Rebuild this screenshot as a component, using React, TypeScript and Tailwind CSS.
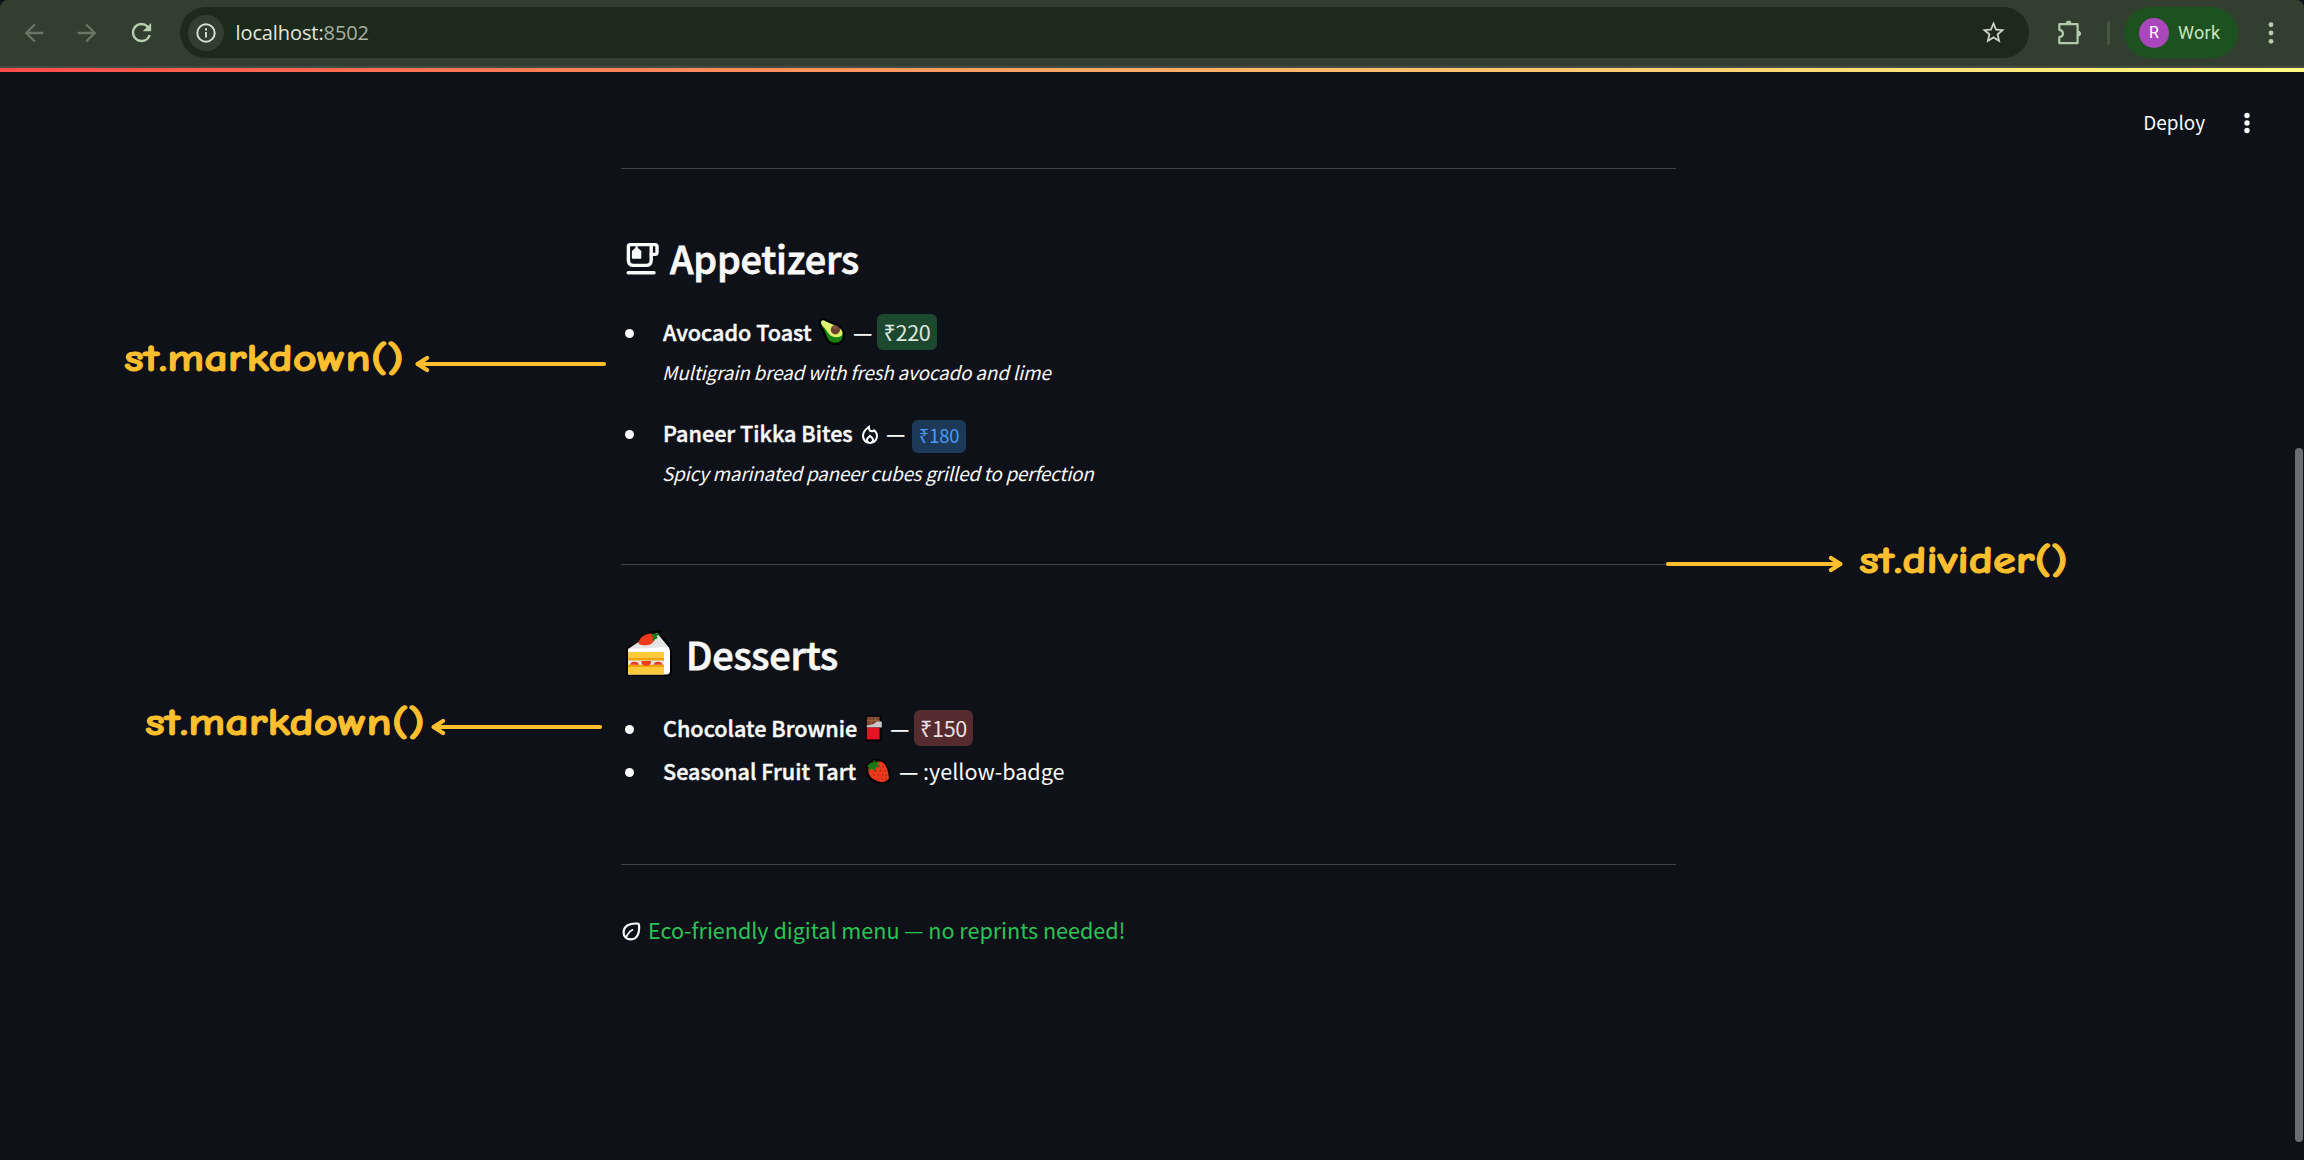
import type { ReactNode } from "react";
import { MdArrowBack, MdArrowForward, MdRefresh, MdStarBorder, MdOutlineLocalFireDepartment } from "react-icons/md";

function InfoIcon() {
  return (
    <svg width="20" height="20" viewBox="0 0 20 20" fill="none" stroke="#d5dccf" strokeWidth="2">
      <circle cx="10" cy="10" r="8.7" />
      <path d="M10 9v5.5M10 5.2v2.2" />
    </svg>
  );
}

function PuzzleIcon() {
  return (
    <svg width="26" height="26" viewBox="0 0 26 26" fill="none" stroke="#b0cba9" strokeWidth="2.2" strokeLinejoin="round">
      <path d="M2.3 4.2H20.6V23.2H2.3V17.2C7.2 16.5 7.2 10.6 2.3 9.8Z" />
      <path d="M9 3.6a2.6 2.6 0 0 1 5.2 0zM21 11a2.6 2.6 0 0 1 0 5.2z" fill="#b0cba9" strokeWidth="1" />
    </svg>
  );
}

function Dots({ className, r }: { className: string; r: number }) {
  return (
    <svg width="8" height="24" viewBox="0 0 8 24" className={className}>
      <circle cx="4" cy={r > 2.5 ? 4.5 : 3.7} r={r} />
      <circle cx="4" cy="12" r={r} />
      <circle cx="4" cy={r > 2.5 ? 19.5 : 20.3} r={r} />
    </svg>
  );
}

function CupIcon() {
  return (
    <svg width="33" height="33" viewBox="0 0 33 33" fill="none" stroke="#fafafa" strokeWidth="3.4" strokeLinejoin="round" strokeLinecap="round" className="shrink-0">
      <path d="M4.2 2.6H29.2Q31 2.6 31 4.4V10.6Q31 12.4 29.2 12.4H25.2" />
      <path d="M25.2 2.6V18.2Q25.2 23.4 20 23.4H7.6Q2.4 23.4 2.4 18.2V4.4Q2.4 2.6 4.2 2.6" />
      <path d="M2.2 30.8H28" />
      <path d="M10.6 3V6" strokeWidth="2" />
      <path d="M6.6 9.2L10.6 5.8L14.6 9.2V16H6.6Z" fill="#fafafa" strokeWidth="1.4" />
    </svg>
  );
}

function LeafIcon() {
  return (
    <svg width="19" height="19" viewBox="0 0 19 19" fill="none" stroke="#fafafa" strokeWidth="2.2" strokeLinejoin="round" strokeLinecap="round" className="shrink-0">
      <path d="M15.6 1.6Q17 1.6 17 3C17.6 9 16.4 17.4 9 17.4C4.4 17.4 1.6 14.4 1.6 10.6C1.6 3.4 8 1 15.6 1.6Z" />
      <path d="M4.2 15.4Q6 10.4 10.6 7.8" strokeWidth="1.7" />
    </svg>
  );
}

function AvocadoIcon() {
  return (
    <svg width="28" height="28" viewBox="0 0 28 28" className="shrink-0">
      <path d="M2 4Q3-.4 8 2.4C14 5.4 26 8 26 18Q25 26 17 26C8 26 8 18 5 12Q1 7 2 4Z" fill="#16840f" stroke="#000" strokeWidth="2.4" />
      <path d="M3 4Q4 .8 8 3.6C13 6.4 23.6 9 24.6 14.5Q24.6 19 19 19.2C11 19.4 9.6 13.4 6.6 10Q2.6 6.2 3 4Z" fill="#dff06e" />
      <circle cx="17.4" cy="11.8" r="4.6" fill="#6b4230" />
      <circle cx="17" cy="9.8" r="1.6" fill="#8a5b46" />
    </svg>
  );
}

function CakeIcon() {
  return (
    <svg width="48" height="48" viewBox="0 0 48 48" className="shrink-0">
      <path d="M1 46V20Q1 18 3 17L14 10Q20 0 38 0L36 3L45 16Q47 19 47 22V43Q47 46 44 46Z" fill="#000" />
      <path d="M3 19L15 11L32 3L43.5 17V19Z" fill="#e4e4e4" />
      <path d="M3 19L43.5 17Q45 19.5 45 22V41Q45 44.4 41.6 44.4H3Z" fill="#fff" />
      <path d="M3 22H39V44.4H3Z" fill="#ffca3c" />
      <path d="M3 28H39V30.4H3ZM3 35H39V37H3Z" fill="#efa308" />
      <path d="M3 30.4H39V34.6H3Z" fill="#e2e2e2" />
      <path d="M5 34.8a4.6 4 0 0 1 9 0zM16.4 32.4V31H26V32.4a4.8 3.4 0 0 1-9.6 0zM28.5 34.8a4.6 4 0 0 1 9 0z" fill="#ee3a1c" />
      <path d="M13.5 13Q14 8 19 5.4Q25 2 29 5L29.5 10Q27 15.4 20 15.2Q14 15.4 13.5 13Z" fill="#ee3a1c" />
      <path d="M26 5L30 3.4L35 4L31.4 6.4L33 8L29.6 9.4L29 11.4Q26.6 9.4 28.6 7Z" fill="#157a12" />
    </svg>
  );
}

function ChocolateIcon() {
  return (
    <svg width="18" height="27" viewBox="0 0 18 27" className="shrink-0">
      <rect x="0.6" y="0.4" width="16" height="26" rx="1.5" fill="#000" />
      <path d="M1.8 1.8H14.6V12H1.8Z" fill="#7c472c" />
      <path d="M1.8 5.6H14.6M6 1.8V10M10.4 1.8V10" stroke="#9a6748" strokeWidth="0.8" />
      <path d="M1.8 10.4Q9 10 12 6.4H16.8V12.6H1.8Z" fill="#c9c9c9" />
      <path d="M1.8 12.6H14.6V24.4H1.8Z" fill="#e81224" />
    </svg>
  );
}

function StrawberryIcon() {
  return (
    <svg width="27" height="27" viewBox="0 0 27 27" className="shrink-0">
      <path d="M1.6 7L9 1.4L19 3.4Q24 8 25 21.5Q22 26.4 13 24.8Q1.6 22 1.6 14Z" fill="#000" stroke="#000" strokeWidth="1.6" strokeLinejoin="round" />
      <path d="M3.2 12Q3.6 6 9 4.4Q15 2.4 18.4 4.8Q23 9 24 20.6Q20 25.8 12 23Q3 19.4 3.2 12Z" fill="#ee3a1c" />
      <g fill="#a81c10">
        <circle cx="14" cy="8" r="0.8" /><circle cx="18" cy="8.4" r="0.8" /><circle cx="11" cy="13" r="0.8" /><circle cx="15.4" cy="12.6" r="0.8" />
        <circle cx="20" cy="13" r="0.8" /><circle cx="9" cy="17" r="0.8" /><circle cx="13.4" cy="17" r="0.8" /><circle cx="17.6" cy="17" r="0.8" />
        <circle cx="21.4" cy="17.4" r="0.8" /><circle cx="13" cy="21" r="0.8" /><circle cx="17" cy="21" r="0.8" /><circle cx="20.8" cy="20.8" r="0.8" />
      </g>
      <path d="M2 9Q4 4.4 8 4.4L9.6 1.6L10.4 4.2L14.4 3.8L12.4 6.6L14.2 9.4L10.6 9.2L10 14L7 10.6L3 13.4L4.4 9.4Z" fill="#157a12" />
    </svg>
  );
}

function Divider() {
  return <div className="ml-px h-px w-[1055px] bg-[#414347]" />;
}

function Bullet() {
  return <span className="ml-[5px] mr-[29px] mt-[3px] size-[9px] shrink-0 rounded-full bg-[#fafafa]" />;
}

function Name({ children }: { children: ReactNode }) {
  return <span className="font-medium [-webkit-text-stroke:0.45px_#fafafa]">{children}</span>;
}

function Arrow({ width, flip }: { width: number; flip?: boolean }) {
  return (
    <svg width={width} height="20" viewBox={`0 0 ${width} 20`} fill="none" stroke="#ffbf2e" strokeWidth="4.2" strokeLinecap="round" strokeLinejoin="round" className={flip ? "-scale-x-100" : ""}>
      <path d={`M3 10H${width - 3}`} />
      <path d="M12 4L2.6 10L12 16" />
    </svg>
  );
}

function BrowserBar() {
  return (
    <div className="flex h-[66px] items-center rounded-t-lg bg-[#323e2f] pb-px">
      <MdArrowBack className="ml-[20px] size-[28px] text-[#687663]" />
      <MdArrowForward className="ml-[25px] size-[28px] text-[#687663]" />
      <MdRefresh className="ml-[26px] size-[29px] text-[#b6cdb0]" />
      <div className="ml-[24px] flex h-[51px] w-[1849px] items-center rounded-full bg-[#1d291a] pl-[7.5px]">
        <div className="flex size-[36px] items-center justify-center rounded-full bg-[#323e2f]"><InfoIcon /></div>
        <span className="ml-[12px] font-['Open_Sans',sans-serif] text-[20px] tracking-[-0.1px] text-[#e3e6df]">
          localhost:<span className="text-[#a9b0a4]">8502</span>
        </span>
        <MdStarBorder className="ml-auto mr-[22px] size-[27px] text-[#cdd2c8]" />
      </div>
      <div className="ml-[28px]"><PuzzleIcon /></div>
      <span className="ml-[24px] h-[24px] w-[3px] rounded-full bg-[#46593f]" />
      <div className="ml-[14px] flex h-[51px] w-[114px] items-center rounded-full bg-[#1e5120] pl-[15px]">
        <span className="flex size-[30px] items-center justify-center rounded-full bg-[#ab47bc] font-[Roboto,sans-serif] text-[16px] text-white">R</span>
        <span className="ml-[9px] font-[Roboto,sans-serif] text-[18px] tracking-[0.3px] text-[#c6e6bf]">Work</span>
      </div>
      <Dots r={2.4} className="ml-[29px] fill-[#b6cdb0]" />
    </div>
  );
}

export default function App() {
  return (
    <div className="relative h-[1160px] w-[2304px] overflow-hidden bg-[#0e1117] font-['Noto_Sans_CJK_SC','Noto_Sans',sans-serif] text-[#fafafa]">
      <BrowserBar />
      <div className="h-[2px] bg-[#484b45]" />
      <div className="h-[4px] bg-linear-to-r from-[#ff4b4b] to-[#fffd80]" />

      <header className="flex h-[96px] items-center justify-end pt-[4px] pr-[53px] text-[18.9px]">
        <span>Deploy</span>
        <Dots r={2.7} className="mt-[2px] ml-[38px] fill-[#fafafa]" />
      </header>

      <main className="ml-[620px] w-[1056px] text-[21.6px] whitespace-nowrap">
        <Divider />
        <h1 className="mt-[62px] flex h-[54px] items-center pl-[6px] text-[37.8px] leading-[54px] font-medium tracking-[-0.2px] [-webkit-text-stroke:0.8px_#fafafa]">
          <CupIcon />
          <span className="ml-[11px]">Appetizers</span>
        </h1>

        <ul>
          <li className="mt-[29px]">
            <div className="flex h-9 items-center leading-9">
              <Bullet />
              <span className="w-[155px]"><Name>Avocado Toast</Name></span>
              <AvocadoIcon />
              <span className="ml-[7px] w-[24px] font-medium">—</span>
              <span className="h-9 w-[60px] rounded-md bg-[#1d4830] text-center tracking-[-0.3px] text-[#dde5df]">₹220</span>
            </div>
            <div className="mt-1 ml-[42px] h-9 text-[18.9px] leading-9 tracking-[-0.18px] italic">Multigrain bread with fresh avocado and lime</div>
          </li>
          <li className="mt-[25px]">
            <div className="flex h-9 items-center leading-9">
              <Bullet />
              <span className="w-[195px]"><Name>Paneer Tikka Bites</Name></span>
              <MdOutlineLocalFireDepartment className="mt-[4px] size-[24px] shrink-0" />
              <span className="ml-[4px] w-[26px] font-medium">—</span>
              <span className="mt-[7px] h-[33px] w-[54px] rounded-md bg-[#1c3a58] text-center text-[18.4px] leading-[31px] tracking-[-0.2px] text-[#4a9bf5]">₹180</span>
            </div>
            <div className="mt-1 ml-[42px] h-9 text-[18.9px] leading-9 tracking-[-0.24px] italic">Spicy marinated paneer cubes grilled to perfection</div>
          </li>
        </ul>

        <div className="mt-[73px]"><Divider /></div>
        <h1 className="mt-[62px] flex h-[54px] items-center pl-[5px] text-[37.8px] leading-[54px] font-medium tracking-[-0.2px] [-webkit-text-stroke:0.8px_#fafafa]">
          <CakeIcon />
          <span className="ml-[13px]">Desserts</span>
        </h1>

        <ul>
          <li className="mt-[29px] flex h-9 items-center leading-9">
            <Bullet />
            <span className="w-[202px]"><Name>Chocolate Brownie</Name></span>
            <ChocolateIcon />
            <span className="ml-[7px] w-[24px] font-medium">—</span>
            <span className="h-9 w-[59px] rounded-md bg-[#562b30] text-center tracking-[-0.3px] text-[#eedfe0]">₹150</span>
          </li>
          <li className="mt-[7px] flex h-9 items-center leading-9">
            <Bullet />
            <span className="w-[202px]"><Name>Seasonal Fruit Tart</Name></span>
            <StrawberryIcon />
            <span className="ml-[7px] w-[24px] font-medium">—</span>
            <span>:yellow-badge</span>
          </li>
        </ul>

        <div className="mt-[75px]"><Divider /></div>
        <p className="mt-[47px] flex h-9 items-center pl-[2px] leading-9 text-[#2bc454]">
          <span className="mt-[3px]"><LeafIcon /></span>
          <span className="ml-[7px] tracking-[-0.03px]">Eco-friendly digital menu — no reprints needed!</span>
        </p>
      </main>

      <div className="absolute top-[332px] left-[124px] flex items-center font-['Comic_Neue',Lato,cursive] text-[39px] leading-[54px] font-bold text-[#ffbf2e]">
        <span className="w-[285px] origin-left scale-x-[1.19] whitespace-nowrap [-webkit-text-stroke:1px_#ffbf2e]">st.markdown()</span>
        <div className="mt-[9px] ml-[6px]"><Arrow width={192} /></div>
      </div>
      <div className="absolute top-[696px] left-[145px] flex items-center font-['Comic_Neue',Lato,cursive] text-[39px] leading-[54px] font-bold text-[#ffbf2e]">
        <span className="w-[285px] origin-left scale-x-[1.19] whitespace-nowrap [-webkit-text-stroke:1px_#ffbf2e]">st.markdown()</span>
        <div className="mt-[7px] ml-px"><Arrow width={172} /></div>
      </div>
      <div className="absolute top-[534px] left-[1665px] flex items-center font-['Comic_Neue',Lato,cursive] text-[39px] leading-[54px] font-bold text-[#ffbf2e]">
        <div className="mt-[6px]"><Arrow width={178} flip /></div>
        <span className="ml-[16px] origin-left scale-x-[1.19] whitespace-nowrap [-webkit-text-stroke:1px_#ffbf2e]">st.divider()</span>
      </div>

      <div className="absolute top-[448px] left-[2295px] h-[694px] w-[8px] rounded-full bg-[#6c6d72]" />
    </div>
  );
}
